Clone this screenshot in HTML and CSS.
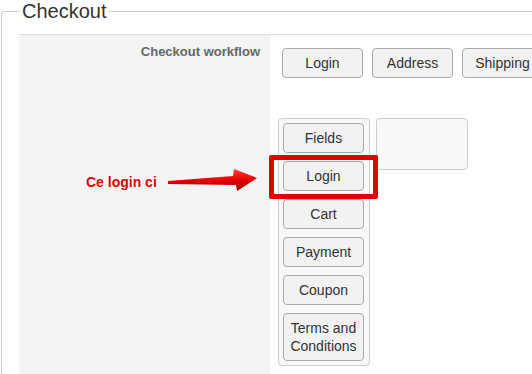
FILE: index.html
```html
<!DOCTYPE html>
<html lang="en">
<head>
  <meta charset="UTF-8">
  <title>Checkout</title>
  <link rel="stylesheet" href="styles.css">
</head>
<body>
  <fieldset class="box">
    <legend>Checkout</legend>
    <div class="row">
      <div class="label">Checkout workflow</div>
      <div class="field">
        <div class="steps">
          <button class="btn">Login</button>
          <button class="btn">Address</button>
          <button class="btn">Shipping</button>
        </div>
        <div class="lists">
          <div class="pool">
            <button class="btn">Fields</button>
            <button class="btn">Login</button>
            <button class="btn">Cart</button>
            <button class="btn">Payment</button>
            <button class="btn">Coupon</button>
            <button class="btn">Terms and Conditions</button>
          </div>
          <div class="drop"></div>
        </div>
      </div>
    </div>
  </fieldset>

  <div class="note">Ce login ci</div>
  <svg class="arrow" width="100" height="30" viewBox="160 165 100 30">
    <defs>
      <linearGradient id="red" x1="0" y1="0" x2="0" y2="1">
        <stop offset="0" stop-color="#ff3b3b"/>
        <stop offset="0.5" stop-color="#e80000"/>
        <stop offset="1" stop-color="#a00000"/>
      </linearGradient>
    </defs>
    <polygon points="168,181 233,176 234,169 257,178 237,191 236,185 168,184" fill="url(#red)"/>
  </svg>
  <div class="mark"></div>
</body>
</html>
```

FILE: styles.css
```css
body {
  margin: 0;
  background: #fff;
  font-family: "Liberation Sans", Arial, sans-serif;
  color: #333;
  height: 374px;
  overflow: hidden;
  position: relative;
}
.box {
  margin: 0 0 0 1px;
  padding: 0 0 0 17px;
  border: 1px solid #ccc;
  border-bottom: none;
  border-radius: 3px 3px 0 0;
}
.box legend {
  font-size: 20px;
  padding: 0 1px 0 3px;
  color: #333;
}
.row {
  display: flex;
  margin-top: 11px;
  border-top: 1px solid #ddd;
  height: 339px;
}
.label {
  width: 241px;
  padding: 8px 9px 0 0;
  background: #f4f4f4;
  text-align: right;
  font-size: 13px;
  line-height: 18px;
  font-weight: bold;
  color: #666;
}
.field {
  flex: 1;
  padding: 13px 0 0 0;
  border-left: 1px solid #eee;
}
.steps {
  display: flex;
  gap: 9px;
  padding-left: 12px;
  white-space: nowrap;
}
.btn {
  width: 81px;
  padding: 5px 4px;
  border: 1px solid #aaa;
  border-radius: 4px;
  background: #f2f2f2;
  font-family: "Liberation Sans", Arial, sans-serif;
  font-size: 14px;
  line-height: 18px;
  color: #333;
  text-align: center;
  flex: none;
}
.lists {
  display: flex;
  align-items: flex-start;
  gap: 6px;
  margin-top: 40px;
  padding-left: 8px;
}
.pool {
  display: flex;
  flex-direction: column;
  gap: 8px;
  padding: 4px 5px 4px 4px;
  border: 1px solid #ccc;
  border-radius: 4px;
  background: #f8f8f8;
}
.drop {
  width: 90px;
  height: 50px;
  border: 1px solid #ccc;
  border-radius: 4px;
  background: #f8f8f8;
}
.note {
  position: absolute;
  left: 86px;
  top: 174px;
  font-size: 14px;
  line-height: 16px;
  font-weight: bold;
  color: #e00000;
  text-shadow: 1px 0 #fff, -1px 0 #fff, 0 1px #fff, 0 -1px #fff, 1px 1px #fff, -1px -1px #fff;
}
.arrow {
  position: absolute;
  left: 160px;
  top: 165px;
}
.mark {
  position: absolute;
  left: 269px;
  top: 155px;
  width: 99px;
  height: 34px;
  border: 5px solid #e00000;
  border-radius: 2px;
}
```
